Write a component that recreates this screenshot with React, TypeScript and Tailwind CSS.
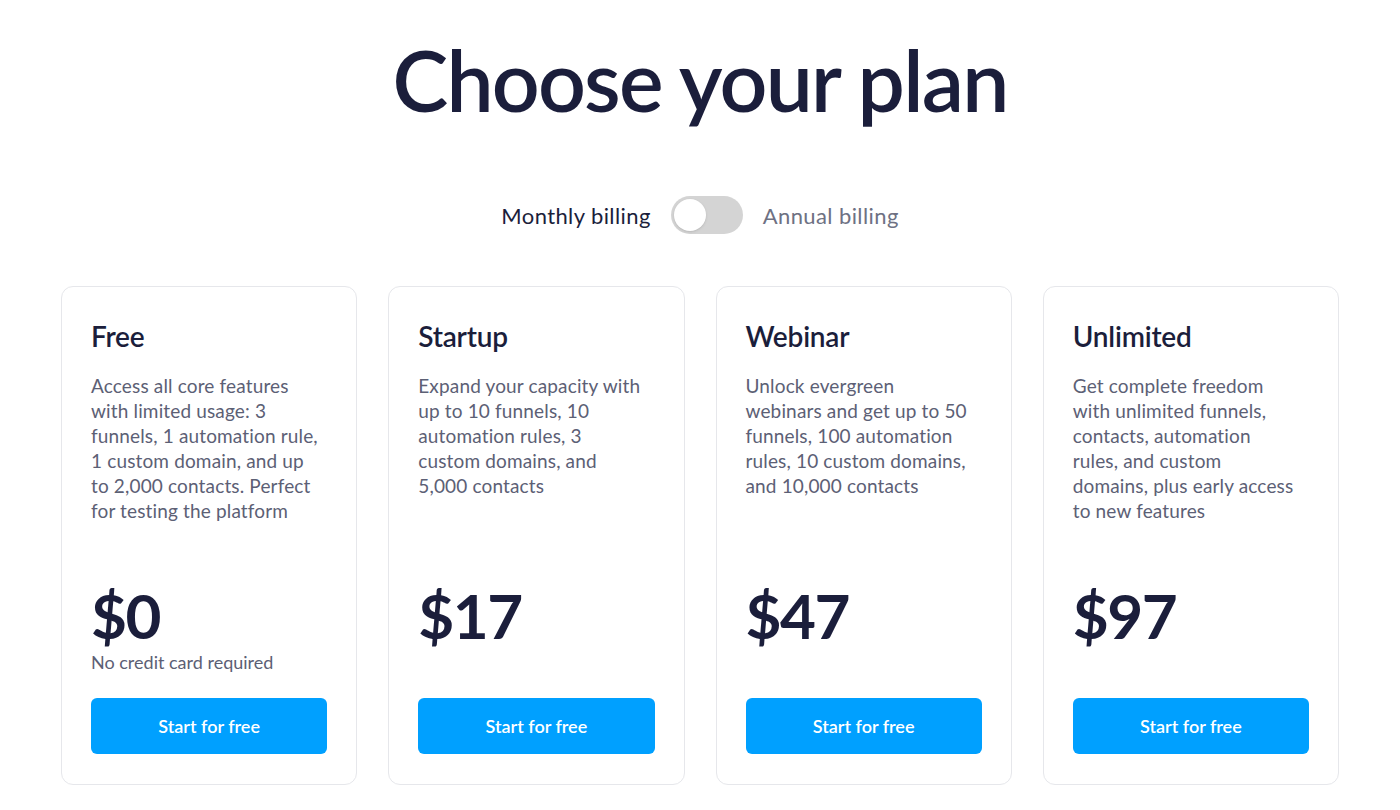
const plans = [
  {
    name: 'Free',
    lines: ['Access all core features', 'with limited usage: 3', 'funnels, 1 automation rule,', '1 custom domain, and up', 'to 2,000 contacts. Perfect', 'for testing the platform'],
    price: '$0',
    note: 'No credit card required',
  },
  {
    name: 'Startup',
    lines: ['Expand your capacity with', 'up to 10 funnels, 10', 'automation rules, 3', 'custom domains, and', '5,000 contacts'],
    price: '$17',
  },
  {
    name: 'Webinar',
    lines: ['Unlock evergreen', 'webinars and get up to 50', 'funnels, 100 automation', 'rules, 10 custom domains,', 'and 10,000 contacts'],
    price: '$47',
  },
  {
    name: 'Unlimited',
    lines: ['Get complete freedom', 'with unlimited funnels,', 'contacts, automation', 'rules, and custom', 'domains, plus early access', 'to new features'],
    price: '$97',
  },
]

type Plan = (typeof plans)[number]

function PlanCard({ plan }: { plan: Plan }) {
  return (
    <div className="flex flex-col rounded-xl border border-[#e6e7eb] bg-white px-[29px] pt-[30px] pb-[30px] h-[499px]">
      <h3 className="text-[28px] leading-[38px] font-semibold text-[#1b1e3b] tracking-[-0.2px]">{plan.name}</h3>
      <p className="mt-[18px] h-[209px] text-[19px] leading-[25px] tracking-[0.15px] text-[#5c6075]">
        {plan.lines.map((l) => (
          <span key={l} className="block whitespace-nowrap">
            {l}
          </span>
        ))}
      </p>
      <div className="text-[62px] leading-[66px] font-bold text-[#1b1e3b] tracking-[-1.5px]">{plan.price}</div>
      {plan.note && <div className="mt-[2px] text-[18px] leading-[24px] text-[#5c6075]">{plan.note}</div>}
      <button
        type="button"
        className="mt-auto h-[56px] w-full rounded-md bg-[#00a0ff] text-[18px] font-semibold text-white"
      >
        Start for free
      </button>
    </div>
  )
}

export default function App() {
  return (
    <div className="min-h-[810px] bg-white font-['Lato',sans-serif] text-[#1b1e3b]">
      <div className="mx-auto w-[1278px] pt-[30px]">
        <h1 className="text-center text-[84px] leading-[100px] font-semibold tracking-[-1.8px]">Choose your plan</h1>
        <div className="mt-[66px] flex items-center justify-center gap-[20px]">
          <span className="text-[22px] tracking-[0.4px] text-[#1b1e3b]">Monthly billing</span>
          <span className="relative inline-block h-[38px] w-[72px] rounded-full bg-[#d4d4d4]">
            <span className="absolute left-[3px] top-[3px] h-[32px] w-[32px] rounded-full bg-white shadow-sm" />
          </span>
          <span className="text-[22px] tracking-[0.4px] text-[#6e7183]">Annual billing</span>
        </div>
        <div className="mt-[52px] grid grid-cols-4 gap-[31px]">
          {plans.map((p) => (
            <PlanCard key={p.name} plan={p} />
          ))}
        </div>
      </div>
    </div>
  )
}
